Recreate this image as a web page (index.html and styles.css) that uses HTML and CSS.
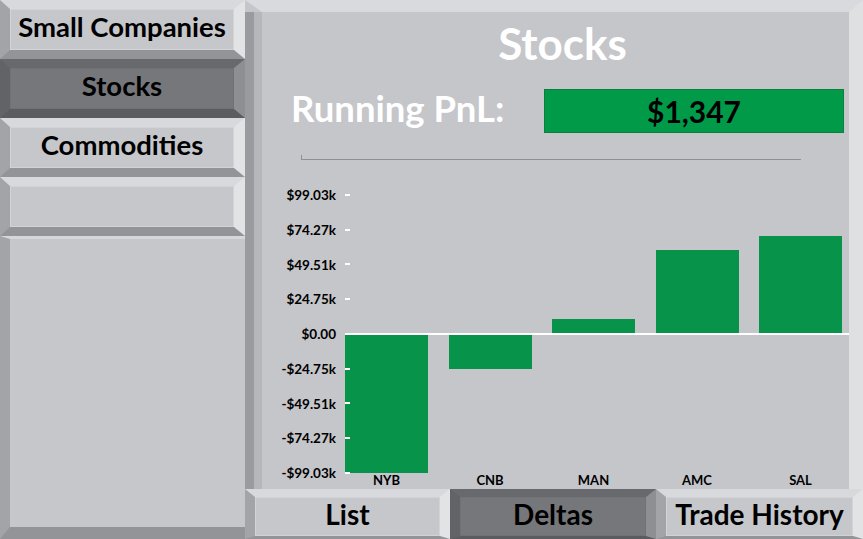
FILE: index.html
```html
<!DOCTYPE html>
<html lang="en">
<head>
    <meta charset="UTF-8">
    <meta name="viewport" content="width=device-width, initial-scale=1.0">
    <title>Stocks - Deltas</title>
    <link rel="stylesheet" href="styles.css">
</head>
<body>
    <div class="app">
        <nav class="sidebar">
            <button class="bevel side-btn">Small Companies</button>
            <button class="bevel side-btn active">Stocks</button>
            <button class="bevel side-btn">Commodities</button>
            <button class="bevel side-btn"></button>
            <div class="bevel filler"></div>
        </nav>

        <main class="main">
            <section class="panel">
                <h1 class="title">Stocks</h1>
                <div class="pnl">
                    <span class="pnl-label">Running PnL:</span>
                    <span class="pnl-value">$1,347</span>
                </div>
                <div class="rule"></div>

                <div class="chart">
                    <div class="axis">
                        <span>$99.03k</span>
                        <span>$74.27k</span>
                        <span>$49.51k</span>
                        <span>$24.75k</span>
                        <span>$0.00</span>
                        <span>-$24.75k</span>
                        <span>-$49.51k</span>
                        <span>-$74.27k</span>
                        <span>-$99.03k</span>
                    </div>
                    <div class="plot">
                        <!-- 139px = $99.03k -->
                        <div class="col">
                            <div class="up"></div>
                            <div class="down"><div class="bar" style="height:139px"></div></div>
                        </div>
                        <div class="col">
                            <div class="up"></div>
                            <div class="down"><div class="bar" style="height:35px"></div></div>
                        </div>
                        <div class="col">
                            <div class="up"><div class="bar" style="height:15px"></div></div>
                            <div class="down"></div>
                        </div>
                        <div class="col">
                            <div class="up"><div class="bar" style="height:84px"></div></div>
                            <div class="down"></div>
                        </div>
                        <div class="col">
                            <div class="up"><div class="bar" style="height:98px"></div></div>
                            <div class="down"></div>
                        </div>
                    </div>
                    <div class="cats">
                        <span>NYB</span>
                        <span>CNB</span>
                        <span>MAN</span>
                        <span>AMC</span>
                        <span>SAL</span>
                    </div>
                </div>
            </section>

            <div class="tabs">
                <button class="bevel tab">List</button>
                <button class="bevel tab active">Deltas</button>
                <button class="bevel tab">Trade History</button>
            </div>
        </main>
    </div>
</body>
</html>
```

FILE: styles.css
```css
body {
    margin: 0;
    font-family: Lato, "Open Sans", sans-serif;
    background-color: #c6c7cb;
}
.app {
    display: grid;
    grid-template-columns: 245px 618px;
    height: 539px;
    overflow: hidden;
}

/* bevelled buttons, like the Excel "Angle" shape */
.bevel {
    box-sizing: border-box;
    margin: 0;
    padding: 0;
    border-style: solid;
    border-width: 9px 11px 9px 10px;
    border-color: #d8d9dc #e2e3e5 #939498 #a3a4a8;
    background-color: #c6c7cb;
    box-shadow: inset 0 0 0 1px #d2d3d6;
    font-family: inherit;
    font-weight: 700;
    color: #000;
    cursor: pointer;
}
.bevel.active {
    border-color: #68696c #8e8f92 #5b5c5f #626366;
    background-color: #76777a;
    box-shadow: inset 0 0 0 1px #717275;
}

.sidebar {
    display: flex;
    flex-direction: column;
}
.side-btn {
    height: 59px;
    font-size: 27.5px;
    line-height: 1;
    padding-bottom: 6px;
}
.filler {
    flex: 1;
    border-width: 3px 0 12px 10px;
    border-color: #d6d7da #c6c7cb #939498 #a3a4a8;
    box-shadow: none;
}

.main {
    display: flex;
    flex-direction: column;
}
.panel {
    box-sizing: border-box;
    height: 489px;
    border-style: solid;
    border-width: 12px 14px 0 17px;
    border-color: #d9dadd #dfe0e2 #c6c7cb transparent;
    background: linear-gradient(to right, #9a9b9f 0 9px, #b6b7bb 9px 17px, transparent 17px) border-box, #c5c6ca;
}
.title {
    margin: 6px 0 0 14px;
    font-size: 44px;
    line-height: 50px;
    color: #fff;
    text-align: center;
}
.pnl {
    display: flex;
    align-items: center;
    justify-content: space-between;
    margin: 21px 0 0 29px;
    padding-right: 5px;
    height: 44px;
}
.pnl-label {
    font-size: 36.5px;
    font-weight: 700;
    color: #fff;
    margin-top: -6px;
}
.pnl-value {
    box-sizing: border-box;
    width: 300px;
    height: 44px;
    display: flex;
    align-items: center;
    justify-content: center;
    background-color: #009a48;
    border: 1px solid #0c7f3e;
    font-size: 30px;
    font-weight: 700;
    color: #000;
}
.rule {
    margin: 22px 0 0 39px;
    width: 499px;
    height: 4px;
    border-left: 1px solid #8f9094;
    border-bottom: 1px solid #8f9094;
}

/* chart */
.chart {
    display: grid;
    grid-template-columns: 83px 504px;
    grid-template-rows: 278px auto;
    margin-top: 35px;
}
.axis {
    display: flex;
    flex-direction: column;
    justify-content: space-between;
    align-items: flex-end;
    height: 294px;
    margin-top: -8px;
    padding-right: 9px;
    font-size: 13.5px;
    font-weight: 700;
    line-height: 16px;
    color: #000;
}
.plot {
    position: relative;
    display: flex;
    gap: 20.5px;
}
/* zero line */
.plot::before {
    content: "";
    position: absolute;
    left: 0;
    right: 0;
    top: 138px;
    height: 2px;
    background-color: #fff;
    z-index: 1;
}
/* axis ticks */
.plot::after {
    content: "";
    position: absolute;
    left: 0;
    top: -1px;
    width: 5px;
    height: 282px;
    background: repeating-linear-gradient(to bottom, #fff 0 2px, transparent 2px 34.75px);
    z-index: 1;
}
.col {
    width: 83px;
    display: flex;
    flex-direction: column;
}
.up, .down {
    height: 139px;
    display: flex;
    flex-direction: column;
}
.up {
    justify-content: flex-end;
}
.bar {
    background-color: #08934a;
}
.cats {
    grid-column: 2;
    display: flex;
    gap: 20.5px;
    font-size: 13px;
    font-weight: 700;
    line-height: 14px;
    color: #000;
}
.cats span {
    width: 83px;
    text-align: center;
}

.tabs {
    display: grid;
    grid-template-columns: 205px 206px 207px;
    height: 50px;
}
.tab {
    height: 50px;
    border-width: 8px 10px 3px 10px;
    font-size: 28px;
    line-height: 1;
    padding-bottom: 6px;
}
```
